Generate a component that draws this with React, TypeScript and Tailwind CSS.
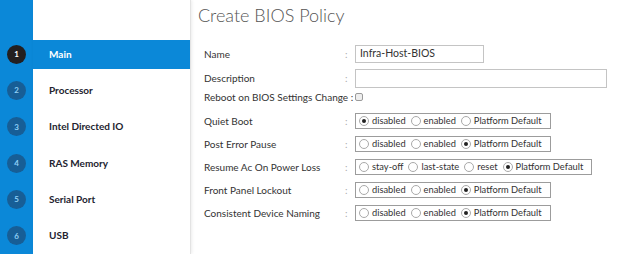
import React from 'react';

const steps = ['Main', 'Processor', 'Intel Directed IO', 'RAS Memory', 'Serial Port', 'USB'];

type RadioRow = { label: string; options: string[]; selected: number };

const radioRows: RadioRow[] = [
  { label: 'Quiet Boot', options: ['disabled', 'enabled', 'Platform Default'], selected: 0 },
  { label: 'Post Error Pause', options: ['disabled', 'enabled', 'Platform Default'], selected: 2 },
  { label: 'Resume Ac On Power Loss', options: ['stay-off', 'last-state', 'reset', 'Platform Default'], selected: 3 },
  { label: 'Front Panel Lockout', options: ['disabled', 'enabled', 'Platform Default'], selected: 2 },
  { label: 'Consistent Device Naming', options: ['disabled', 'enabled', 'Platform Default'], selected: 2 },
];

const Radio: React.FC<{ checked: boolean }> = ({ checked }) => (
  <span className="w-[10px] h-[10px] rounded-full border border-[#a9a9a9] bg-white flex items-center justify-center shrink-0">
    {checked && <span className="w-[4px] h-[4px] rounded-full bg-[#222]" />}
  </span>
);

const FieldLabel: React.FC<{ text: string }> = ({ text }) => (
  <>
    <div className="w-[141px] shrink-0 text-[10px] text-[#333] whitespace-nowrap">{text}</div>
    <div className="w-[10px] shrink-0 text-[10px] text-[#aaa]">:</div>
  </>
);

export default function App() {
  return (
    <div className="w-[637px] h-[254px] flex bg-white overflow-hidden" style={{ fontFamily: 'Lato, "Liberation Sans", sans-serif' }}>
      {/* step strip */}
      <div className="w-[33px] bg-[#0b88d8] flex flex-col pt-[36px]">
        {steps.map((_, i) => (
          <div key={i} className="h-[36.6px] flex items-center justify-center">
            <span
              className={`w-[19px] h-[19px] rounded-full flex items-center justify-center text-[8px] font-bold ${
                i === 0 ? 'bg-[#231f20] text-white' : 'bg-[#175e96] text-[#8fd0f7]'
              }`}
            >
              {i + 1}
            </span>
          </div>
        ))}
      </div>

      {/* nav */}
      <div className="w-[158px] flex flex-col pt-[36px] border-r border-[#e3e3e3] shadow-[1px_0_3px_rgba(0,0,0,0.08)]">
        {steps.map((s, i) => (
          <div key={s} className="h-[36.6px] flex items-center">
            <div
              className={`w-full h-[29px] flex items-center pl-[16px] text-[10px] font-bold ${
                i === 0 ? 'bg-[#0b88d8] text-white' : 'text-[#23232f]'
              }`}
            >
              {s}
            </div>
          </div>
        ))}
      </div>

      {/* content */}
      <div className="flex-1 pl-[7px]">
        <h1 className="text-[18px] font-light text-[#555] leading-[22px] mt-[4px]">Create BIOS Policy</h1>
        <div className="pl-[6px] mt-[19px] flex flex-col">
          <div className="h-[18px] flex items-center">
            <FieldLabel text="Name" />
            <div className="w-[129px] h-[18px] border border-[#c4c4c4] flex items-center pl-[4px] text-[10.5px] text-[#333]">
              Infra-Host-BIOS
            </div>
          </div>
          <div className="h-[19px] mt-[6px] flex items-center">
            <FieldLabel text="Description" />
            <div className="w-[252px] h-[19px] border border-[#c4c4c4]" />
          </div>
          <div className="h-[10px] mt-[4px] flex items-center">
            <div className="w-[151px] shrink-0 text-[10px] text-[#333] whitespace-nowrap">Reboot on BIOS Settings Change :</div>
            <span className="w-[8px] h-[8px] rounded-[2px] border border-[#9a9a9a] bg-[#eee]" />
          </div>
          {radioRows.map((r, i) => (
            <div key={r.label} className={`h-[16px] flex items-center ${i === 0 ? 'mt-[11px]' : 'mt-[7px]'}`}>
              <FieldLabel text={r.label} />
              <div className="h-[16px] border border-[#9c9c9c] flex items-center gap-[5px] pl-[3px] pr-[8px]">
                {r.options.map((o, j) => (
                  <span key={o} className="flex items-center gap-[3px] text-[9.3px] text-[#333] whitespace-nowrap">
                    <Radio checked={j === r.selected} />
                    {o}
                  </span>
                ))}
              </div>
            </div>
          ))}
        </div>
      </div>
    </div>
  );
}
